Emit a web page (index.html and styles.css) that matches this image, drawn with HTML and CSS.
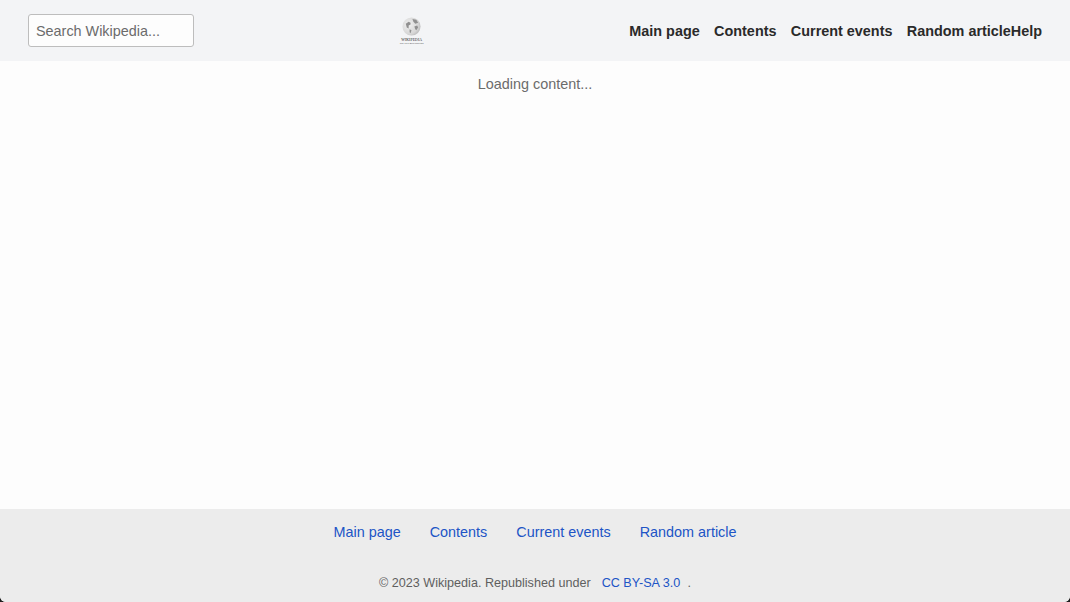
FILE: index.html
```html
<!DOCTYPE html>
<html lang="en">
<head>
<meta charset="utf-8">
<title>Wikipedia</title>
<link rel="stylesheet" href="styles.css">
</head>
<body>
<div class="page">
  <header class="header">
    <input class="search" type="text" placeholder="Search Wikipedia...">
    <a class="logo" href="#">
      <svg class="globe" width="19" height="19" viewBox="0 0 20 20">
        <defs>
          <radialGradient id="g" cx="0.35" cy="0.4" r="0.8">
            <stop offset="0" stop-color="#f0f0f0"/>
            <stop offset="0.65" stop-color="#d6d6d6"/>
            <stop offset="1" stop-color="#a8a8a8"/>
          </radialGradient>
        </defs>
        <circle cx="10" cy="10" r="9.5" fill="url(#g)"/>
        <path d="M4 7l3-2 2 1 0 2-2 1 0 3-2-1zM11 2l4 1 2 3-3 1-2-2zM13 10l3-1 1 2-2 3-1-1zM8 13l2 1-1 3-1-1z" fill="#909090"/>
      </svg>
      <span class="wordmark">Wikipedia</span>
      <span class="tagline">The Free Encyclopedia</span>
    </a>
    <nav class="topnav">
      <a href="#">Main page</a>
      <a href="#">Contents</a>
      <a href="#">Current events</a>
      <a class="flush" href="#">Random article</a>
      <a href="#">Help</a>
    </nav>
  </header>
  <main class="content">
    <p class="loading">Loading content...</p>
  </main>
  <footer class="footer">
    <nav class="footnav">
      <a href="#">Main page</a>
      <a href="#">Contents</a>
      <a href="#">Current events</a>
      <a href="#">Random article</a>
    </nav>
    <p class="legal"><span>© 2023 Wikipedia. Republished under</span><a href="#">CC BY-SA 3.0</a><span>.</span></p>
  </footer>
</div>
</body>
</html>
```
FILE: styles.css
```css
* { box-sizing: border-box; }
html, body { margin: 0; height: 100%; background: #1f1f1f; }
body { font-family: "Liberation Sans", Arial, sans-serif; overflow: hidden; }
a { text-decoration: none; }
p { margin: 0; }

.page {
  height: 602px;
  display: flex;
  flex-direction: column;
  background: #fdfdfd;
  border-radius: 0 0 6px 6px;
  overflow: hidden;
}

.header {
  height: 61px;
  flex: none;
  display: flex;
  justify-content: space-between;
  align-items: center;
  padding: 0 28px;
  background: #f3f4f6;
}
.search {
  width: 166px;
  height: 33px;
  padding: 0 7px;
  border: 1px solid #bdbdbd;
  border-radius: 3px;
  background: #fdfdfd;
  font: 14.4px "Liberation Sans", Arial, sans-serif;
  color: #6b6b6b;
  outline: none;
}
.search::placeholder { color: #6b6b6b; opacity: 1; }

.logo {
  width: 24px;
  display: flex;
  flex-direction: column;
  align-items: center;
  color: #333;
  margin-top: 1px;
}
.globe { display: block; }
.wordmark {
  font: 3.8px/4px "Liberation Serif", serif;
  text-transform: uppercase;
  white-space: nowrap;
  letter-spacing: 0.1px;
  margin-top: 2px;
  color: #222;
}
.tagline {
  font: 2.3px/3px "Liberation Sans", sans-serif;
  white-space: nowrap;
  color: #555;
}

.topnav { display: flex; justify-content: flex-end; }
.topnav a {
  font-size: 14.4px;
  font-weight: 700;
  color: #2a2a2a;
  margin-left: 14.4px;
}
.topnav a:first-child,
.topnav a.flush + a { margin-left: 0; }

.content { flex: 1; padding-top: 15px; }
.loading {
  text-align: center;
  font-size: 14.4px;
  line-height: 17px;
  color: #6b6b6b;
}

.footer {
  height: 93px;
  flex: none;
  background: #ececec;
  padding-top: 15px;
}
.footnav {
  display: flex;
  justify-content: center;
  gap: 29px;
  line-height: 17px;
}
.footnav a { font-size: 14.4px; color: #2054c6; }
.legal {
  margin-top: 35px;
  display: flex;
  justify-content: center;
  font-size: 12.6px;
  line-height: 14px;
  color: #5f5f5f;
}
.legal a { color: #2054c6; margin: 0 7.2px 0 11px; }
```
